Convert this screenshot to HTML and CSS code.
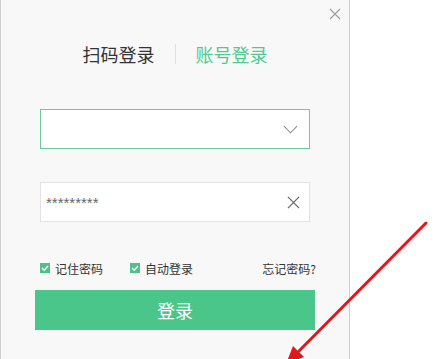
FILE: index.html
```html
<!DOCTYPE html>
<html lang="zh-CN">
  <head>
    <meta charset="UTF-8" />
    <title>登录</title>
    <link rel="stylesheet" href="styles.css">
  </head>
  <body>
    <div class="panel">
      <div class="top-bar">
        <button class="close-button" aria-label="关闭">
          <svg viewBox="0 0 12 12" fill="none" stroke="#9a9a9a" stroke-width="1.1">
            <path d="M1 1L11 11M11 1L1 11"></path>
          </svg>
        </button>
      </div>

      <div class="tabs">
        <span class="tab">扫码登录</span>
        <span class="tab-divider"></span>
        <span class="tab active">账号登录</span>
      </div>

      <form class="login-form">
        <div class="field field-focus">
          <input type="text" class="field-input" value="" />
          <svg class="field-icon chevron" viewBox="0 0 16 9" fill="none" stroke="#8a8a8a" stroke-width="1.1">
            <polyline points="1 1 8 8 15 1"></polyline>
          </svg>
        </div>

        <div class="field">
          <input type="text" class="field-input password" value="*********" />
          <svg class="field-icon clear" viewBox="0 0 14 14" fill="none" stroke="#666666" stroke-width="1.3">
            <path d="M1 1L13 13M13 1L1 13"></path>
          </svg>
        </div>

        <div class="options">
          <label class="check"><span class="check-box"><svg viewBox="0 0 10 10" fill="none" stroke="#ffffff" stroke-width="1.4"><polyline points="2 5 4.2 7.2 8 3"></polyline></svg></span>记住密码</label>
          <label class="check"><span class="check-box"><svg viewBox="0 0 10 10" fill="none" stroke="#ffffff" stroke-width="1.4"><polyline points="2 5 4.2 7.2 8 3"></polyline></svg></span>自动登录</label>
          <a class="forgot" href="#">忘记密码?</a>
        </div>

        <button type="button" class="login-button">登录</button>
      </form>
    </div>

    <!-- 红色指示箭头 -->
    <svg class="pointer-arrow" viewBox="0 0 436 359" width="436" height="359">
      <line x1="426" y1="223" x2="299" y2="351" stroke="#e3161b" stroke-width="3" stroke-linecap="round"></line>
      <polygon points="286,364 293,346 304,357" fill="#e3161b"></polygon>
    </svg>
  </body>
</html>
```

FILE: styles.css
```css
* {
  box-sizing: border-box;
  margin: 0;
  padding: 0;
}
body {
  font-family: "Noto Sans CJK SC", "Noto Sans", sans-serif;
  background: #ffffff;
  width: 436px;
  height: 359px;
  overflow: hidden;
  position: relative;
}
/* 登录面板 */
.panel {
  width: 350px;
  height: 359px;
  background: #f8f8f8;
  border-left: 1px solid #cfcfcf;
  border-right: 1px solid #cfcfcf;
}
.top-bar {
  display: flex;
  justify-content: flex-end;
  padding: 8px 8px 0 0;
  height: 43px;
}
.close-button {
  width: 12px;
  height: 12px;
  border: none;
  background: none;
  cursor: pointer;
}
.close-button svg {
  width: 12px;
  height: 12px;
  display: block;
}
/* 标签切换 */
.tabs {
  display: flex;
  justify-content: center;
  align-items: center;
  gap: 20px;
  height: 22px;
}
.tab {
  font-size: 18px;
  line-height: 22px;
  color: #333333;
}
.tab.active {
  color: #4fca91;
}
.tab-divider {
  width: 1px;
  height: 20px;
  background: #dedede;
}
/* 表单 */
.login-form {
  padding: 0 39px 0 34px;
  margin-top: 44px;
}
.field {
  position: relative;
  width: 270px;
  height: 40px;
  margin-left: 5px;
  background: #ffffff;
  border: 1px solid #e2e2e2;
  display: flex;
  align-items: center;
  margin-bottom: 33px;
}
.field-focus {
  border-color: #6ccaa3;
}
.field-input {
  flex: 1;
  height: 100%;
  border: none;
  outline: none;
  background: transparent;
  padding-left: 5px;
  font-family: "Liberation Sans", sans-serif;
  font-size: 15px;
  color: #666666;
}
.field-icon {
  flex: none;
}
.chevron {
  width: 15px;
  height: 9px;
  margin-right: 11px;
}
.clear {
  width: 13px;
  height: 13px;
  margin-right: 9px;
}
/* 选项行 */
.options {
  display: flex;
  align-items: center;
  margin: -3px 0 0 5px;
  height: 32px;
  font-size: 12px;
  color: #333333;
  width: 276px;
}
.check {
  display: flex;
  align-items: center;
  gap: 5px;
  margin-right: 27px;
}
.check-box {
  width: 10px;
  height: 10px;
  background: #4fbf8b;
  display: flex;
}
.check-box svg {
  width: 10px;
  height: 10px;
}
.forgot {
  margin-left: auto;
  color: #333333;
  text-decoration: none;
}
.login-button {
  display: block;
  width: 280px;
  height: 40px;
  margin-top: 6px;
  border: none;
  background: #4ac68b;
  color: #ffffff;
  font-family: "Noto Sans CJK SC", sans-serif;
  font-size: 18px;
  cursor: pointer;
}
/* 覆盖层箭头 */
.pointer-arrow {
  position: absolute;
  left: 0;
  top: 0;
  pointer-events: none;
}
```
